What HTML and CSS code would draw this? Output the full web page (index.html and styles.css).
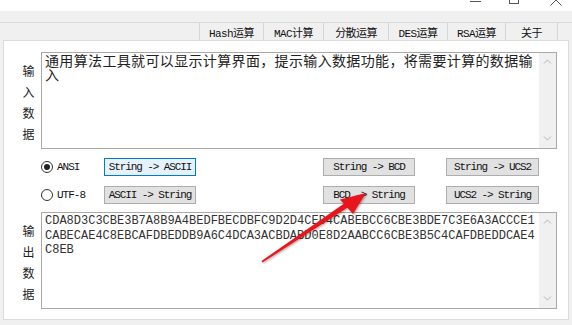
FILE: index.html
```html
<!DOCTYPE html>
<html lang="zh">
<head>
<meta charset="utf-8">
<title>通用算法工具</title>
<link rel="stylesheet" href="styles.css">
</head>
<body>
<div class="window">
  <div class="titlebar">
    <svg class="controls" width="572" height="11" viewBox="0 0 572 11">
      <line x1="470" y1="1.5" x2="481" y2="1.5" stroke="#555" stroke-width="1"/>
      <rect x="509.5" y="-6.5" width="9" height="10" fill="none" stroke="#555"/>
      <path d="M550.5 5.5 L556 0 L561.5 5.5" fill="none" stroke="#555"/>
    </svg>
  </div>
  <div class="menu-gap"></div>
  <div class="tabs">
    <span class="tab">Hash运算</span>
    <span class="tab">MAC计算</span>
    <span class="tab">分散运算</span>
    <span class="tab">DES运算</span>
    <span class="tab">RSA运算</span>
    <span class="tab">关于</span>
  </div>
  <div class="panel">
    <div class="vlabel in-label"><span>输</span><span>入</span><span>数</span><span>据</span></div>
    <div class="box in-box">
      <div class="text cjk">通用算法工具就可以显示计算界面，提示输入数据功能，将需要计算的数据输<br>入</div>
      <div class="scrollbar">
        <svg width="9" height="5" viewBox="0 0 9 5"><path d="M1 4.5 L4.5 1 L8 4.5" fill="none" stroke="#b5b5b5"/></svg>
        <svg width="9" height="5" viewBox="0 0 9 5"><path d="M1 0.5 L4.5 4 L8 0.5" fill="none" stroke="#b5b5b5"/></svg>
      </div>
    </div>

    <div class="controls-row">
      <label class="radio-cell r1"><span class="radio checked"></span><span class="rlabel">ANSI</span></label>
      <span class="btn focused c2 r1">String -&gt; ASCII</span>
      <span class="btn c4 r1">String -&gt; BCD</span>
      <span class="btn c6 r1">String -&gt; UCS2</span>
      <label class="radio-cell r2"><span class="radio"></span><span class="rlabel">UTF-8</span></label>
      <span class="btn c2 r2">ASCII -&gt; String</span>
      <span class="btn c4 r2">BCD -&gt; String</span>
      <span class="btn c6 r2">UCS2 -&gt; String</span>
    </div>

    <div class="vlabel out-label"><span>输</span><span>出</span><span>数</span><span>据</span></div>
    <div class="box out-box">
      <div class="text mono">CDA8D3C3CBE3B7A8B9A4BEDFBECDBFC9D2D4CED4CABEBCC6CBE3BDE7C3E6A3ACCCE1<br>CABECAE4C8EBCAFDBEDDB9A6C4DCA3ACBDABD0E8D2AABCC6CBE3B5C4CAFDBEDDCAE4<br>C8EB</div>
      <div class="scrollbar">
        <svg width="9" height="5" viewBox="0 0 9 5"><path d="M1 4.5 L4.5 1 L8 4.5" fill="none" stroke="#b5b5b5"/></svg>
        <svg width="9" height="5" viewBox="0 0 9 5"><path d="M1 0.5 L4.5 4 L8 0.5" fill="none" stroke="#b5b5b5"/></svg>
      </div>
    </div>
  </div>
  <svg class="arrow" width="572" height="325" viewBox="0 0 572 325">
    <defs>
      <filter id="sh" x="-20%" y="-20%" width="140%" height="140%">
        <feDropShadow dx="1" dy="1" stdDeviation="0.8" flood-color="#000" flood-opacity="0.35"/>
      </filter>
    </defs>
    <g filter="url(#sh)" fill="#e8171b">
      <polygon points="261.5,261 262.5,262.6 350,206 347,201.5"/>
      <polygon points="366,193 340,199.5 353,214"/>
    </g>
  </svg>
</div>
</body>
</html>
```
FILE: styles.css
```css
* { box-sizing: border-box; }
html, body { margin: 0; padding: 0; }
body {
  width: 572px;
  height: 325px;
  overflow: hidden;
  background: #f0f0f0;
  font-family: "Liberation Mono", "Noto Sans CJK SC", monospace;
  color: #111;
}
.window {
  position: relative;
  width: 572px;
  height: 325px;
}
.titlebar {
  height: 11px;
  background: #fff;
}
.controls { display: block; }
.menu-gap { height: 11px; background: #f0f0f0; }
.tabs {
  display: flex;
  height: 18px;
  border-top: 1px solid #dadada;
  padding-left: 199px;
}
.tab {
  display: flex;
  align-items: center;
  justify-content: center;
  height: 17px;
  border-left: 1px solid #d6d6d6;
  font-size: 11px;
  letter-spacing: -0.6px;
  color: #111;
  font-family: "Liberation Mono", "Noto Sans CJK SC", monospace;
}
.tab:last-child { border-right: 1px solid #d6d6d6; }
.tab:nth-child(1) { width: 64px; }
.tab:nth-child(2) { width: 60px; }
.tab:nth-child(3) { width: 65px; }
.tab:nth-child(4) { width: 59px; }
.tab:nth-child(5) { width: 58px; }
.tab:nth-child(6) { width: 53px; }

.panel {
  margin: 0 3px;
  height: 280px;
  background: #fff;
  border: 1px solid #dcdcdc;
  padding: 11px 11px 10px 0;
  display: grid;
  grid-template-columns: 37px 516px;
  grid-template-rows: 97px 63px 97px;
}
.in-label { grid-column: 1; grid-row: 1; }
.in-box { grid-column: 2; grid-row: 1; }
.controls-row { grid-column: 2; grid-row: 2; }
.out-label { grid-column: 1; grid-row: 3; padding-top: 5px; }
.out-box { grid-column: 2; grid-row: 3; }

.vlabel {
  display: flex;
  flex-direction: column;
  align-items: center;
  padding-top: 8px;
  padding-left: 12px;
  font-family: "Noto Sans CJK SC", sans-serif;
  font-size: 12px;
  line-height: 21px;
  color: #222;
}
.box {
  display: flex;
  border: 1px solid #a9a9a9;
  background: #fff;
  min-height: 0;
  min-width: 0;
}
.text {
  flex: 1;
  min-width: 0;
  padding: 0 3px;
  white-space: nowrap;
  overflow: hidden;
}
.cjk {
  font-family: "Noto Sans CJK SC", sans-serif;
  font-size: 14px;
  letter-spacing: 0.35px;
  line-height: 14px;
  color: #222;
}
.mono {
  font-family: "Liberation Mono", monospace;
  font-size: 12px;
  line-height: 14.5px;
  padding-top: 1px;
  color: #333;
}
.scrollbar {
  flex: none;
  width: 17px;
  background: #f0f0f0;
  display: flex;
  flex-direction: column;
  align-items: center;
  justify-content: space-between;
  padding: 6px 0 7px;
}
.scrollbar svg { display: block; }

.controls-row {
  display: grid;
  grid-template-columns: 63px 92px 127px 92px 31px 93px;
  grid-template-rows: 18px 18px;
  row-gap: 10px;
  padding-top: 9px;
}
.r1 { grid-row: 1; }
.r2 { grid-row: 2; }
.c2 { grid-column: 2; }
.c4 { grid-column: 4; }
.c6 { grid-column: 6; }
.radio-cell {
  grid-column: 1;
  display: flex;
  align-items: center;
}
.radio {
  width: 12px;
  height: 12px;
  border: 1px solid #333;
  border-radius: 50%;
  background: #fff;
  display: flex;
  align-items: center;
  justify-content: center;
}
.radio.checked::after {
  content: "";
  width: 6px;
  height: 6px;
  border-radius: 50%;
  background: #222;
}
.rlabel {
  margin-left: 4px;
  font-size: 11px;
  letter-spacing: -1px;
  color: #111;
}
.btn {
  display: flex;
  align-items: center;
  justify-content: center;
  border: 1px solid #adadad;
  background: #e1e1e1;
  font-family: "Liberation Mono", monospace;
  font-size: 11px;
  letter-spacing: -1.1px;
  color: #111;
  white-space: nowrap;
}
.btn.focused {
  border-color: #0078d7;
  background: #e5f1fb;
}
.arrow {
  position: absolute;
  left: 0;
  top: 0;
  pointer-events: none;
}
```
